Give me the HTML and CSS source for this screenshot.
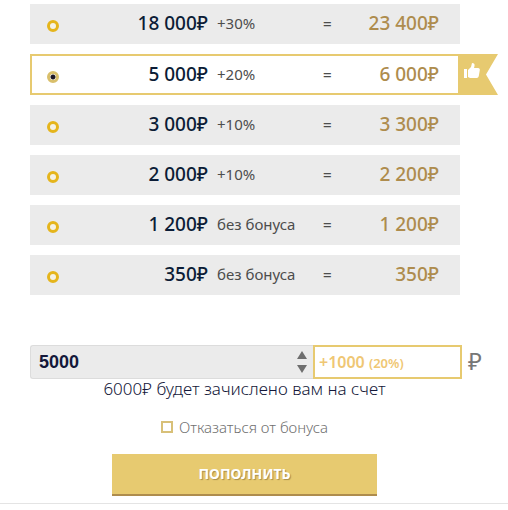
FILE: index.html
```html
<!DOCTYPE html>
<html lang="ru">
<head>
<meta charset="utf-8">
<meta name="viewport" content="width=device-width, initial-scale=1">
<title>Пополнение счета</title>
<link rel="stylesheet" href="styles.css">
</head>
<body>
<form class="topup">
  <div class="plans">
    <label class="plan"><input class="plan-radio" type="radio" name="plan" value="18000"><span class="price">18 000₽</span><span class="bonus">+30%</span><span class="equals">=</span><span class="total">23 400₽</span></label>
    <label class="plan plan-best"><input class="plan-radio" type="radio" name="plan" value="5000" checked><span class="price">5 000₽</span><span class="bonus">+20%</span><span class="equals">=</span><span class="total">6 000₽</span>
      <span class="ribbon"><svg class="thumb" viewBox="0 0 16 16" aria-hidden="true"><path d="M0 6h3v9H0zM4 7l3-3 1-4c2 0 3 1 2.500 3L10 5h4c1.500 0 2 1 1.800 2l-1 6c-.3 1.300-1 2-2 2H6l-2-1z"/></svg></span>
    </label>
    <label class="plan"><input class="plan-radio" type="radio" name="plan" value="3000"><span class="price">3 000₽</span><span class="bonus">+10%</span><span class="equals">=</span><span class="total">3 300₽</span></label>
    <label class="plan"><input class="plan-radio" type="radio" name="plan" value="2000"><span class="price">2 000₽</span><span class="bonus">+10%</span><span class="equals">=</span><span class="total">2 200₽</span></label>
    <label class="plan"><input class="plan-radio" type="radio" name="plan" value="1200"><span class="price">1 200₽</span><span class="bonus">без бонуса</span><span class="equals">=</span><span class="total">1 200₽</span></label>
    <label class="plan"><input class="plan-radio" type="radio" name="plan" value="350"><span class="price">350₽</span><span class="bonus">без бонуса</span><span class="equals">=</span><span class="total">350₽</span></label>
  </div>

  <div class="sum">
    <div class="field">
      <input class="amount" type="number" value="5000" aria-label="Сумма">
      <svg class="stepper" viewBox="0 0 10 22" aria-hidden="true"><path d="M5 0l5 8H0zM5 22l5-8H0z"/></svg>
    </div>
    <output class="extra">+1000 <small class="percent">(20%)</small></output>
    <span class="currency">₽</span>
  </div>

  <div class="footer">
    <p class="result">6000₽ будет зачислено вам на счет</p>
    <label class="refuse"><input class="refuse-box" type="checkbox">Отказаться от бонуса</label>
    <button class="submit" type="submit">ПОПОЛНИТЬ</button>
  </div>
</form>
</body>
</html>
```
FILE: styles.css
```css
* {
  box-sizing: border-box;
}

body {
  margin: 0;
  background: #fff;
  color: #0b1c36;
  font-family: "Noto Sans", "Open Sans", sans-serif;
}

.topup {
  padding: 4px 48px 7px 30px;
  border-bottom: 1px solid #e4e4e4;
}

.plans {
  display: grid;
  gap: 10px;
}

.plan {
  position: relative;
  display: grid;
  grid-template-columns: 12px 149fr 115fr 10px 106fr;
  align-items: center;
  height: 40px;
  padding: 0 21px 0 17px;
  background: #ebebeb;
}

.plan-best {
  height: 41px;
  padding: 0 19px 0 15px;
  border: 2px solid #e7ca70;
  background: #fff;
}

.plan-radio {
  appearance: none;
  width: 12px;
  height: 12px;
  margin: 4px 0 0;
  border: 3px solid #e5b51c;
  border-radius: 50%;
  background: #f5f2e6;
}

.plan-radio:checked {
  border-color: #d9bf6b;
  background: radial-gradient(circle, #1c1624 0 2px, #fff 3px);
}

.price,
.total,
.bonus,
.equals {
  padding-bottom: 2px;
}

.price,
.total {
  font-size: 19px;
  font-weight: 500;
  line-height: 24px;
  text-align: right;
}

.total {
  color: #ae8c4d;
}

.bonus,
.equals {
  color: #4d4d4d;
  font-size: 15px;
  line-height: 20px;
}

.bonus {
  padding-left: 9px;
}

.equals {
  font-weight: 600;
}

.ribbon {
  position: absolute;
  top: -2px;
  bottom: -2px;
  left: 100%;
  width: 40px;
  padding: 9px 0 0 6px;
  background: #e7ca70;
  clip-path: polygon(0 0, 100% 0, 28px 50%, 100% 100%, 0 100%);
}

.thumb {
  display: block;
  width: 16px;
  height: 16px;
  fill: #fff;
}

.sum {
  display: grid;
  grid-template-columns: 283fr 149fr 0;
  grid-template-rows: 34px;
  margin: 50px -2px 0 0;
}

.field {
  position: relative;
}

.amount {
  appearance: textfield;
  display: block;
  width: 100%;
  height: 100%;
  padding: 0 24px 0 8px;
  border: 1px solid #dcdcdc;
  border-right: 0;
  border-radius: 3px 0 0 3px;
  background: #ebebeb;
  color: #14183a;
  font: bold 18px "Liberation Sans", Arial, sans-serif;
}

.amount::-webkit-inner-spin-button {
  appearance: none;
}

.stepper {
  position: absolute;
  top: 6px;
  right: 6px;
  width: 10px;
  height: 22px;
  fill: #6e6e6e;
}

.extra {
  padding-left: 4px;
  border: 2px solid #e7ca70;
  color: #efc774;
  font-size: 16px;
  font-weight: 600;
  line-height: 30px;
}

.percent {
  font-size: 13px;
  font-weight: 600;
  line-height: 20px;
}

.currency {
  padding-left: 6px;
  color: #777;
  font-size: 24px;
  line-height: 32px;
}

.footer {
  display: grid;
  justify-items: center;
  margin-right: 1px;
}

.result {
  margin: 0;
  color: #14183a;
  font-size: 17px;
  font-weight: 350;
  line-height: 20px;
}

.refuse {
  display: flex;
  align-items: center;
  gap: 6px;
  margin-top: 18px;
  color: #707070;
  font-size: 15px;
  font-weight: 350;
  line-height: 20px;
}

.refuse-box {
  appearance: none;
  width: 12px;
  height: 12px;
  margin: 0;
  border: 2px solid #d8c078;
  background: #fff;
}

.submit {
  width: 265px;
  height: 42px;
  margin-top: 17px;
  padding: 0 0 2px;
  border: 0;
  border-bottom: 2px solid #ae8c4d;
  background: #e7ca70;
  color: #fff;
  font: bold 14px "Noto Sans", "Open Sans", sans-serif;
  text-shadow: 1px 1px 1px #a88d4c;
}
```
